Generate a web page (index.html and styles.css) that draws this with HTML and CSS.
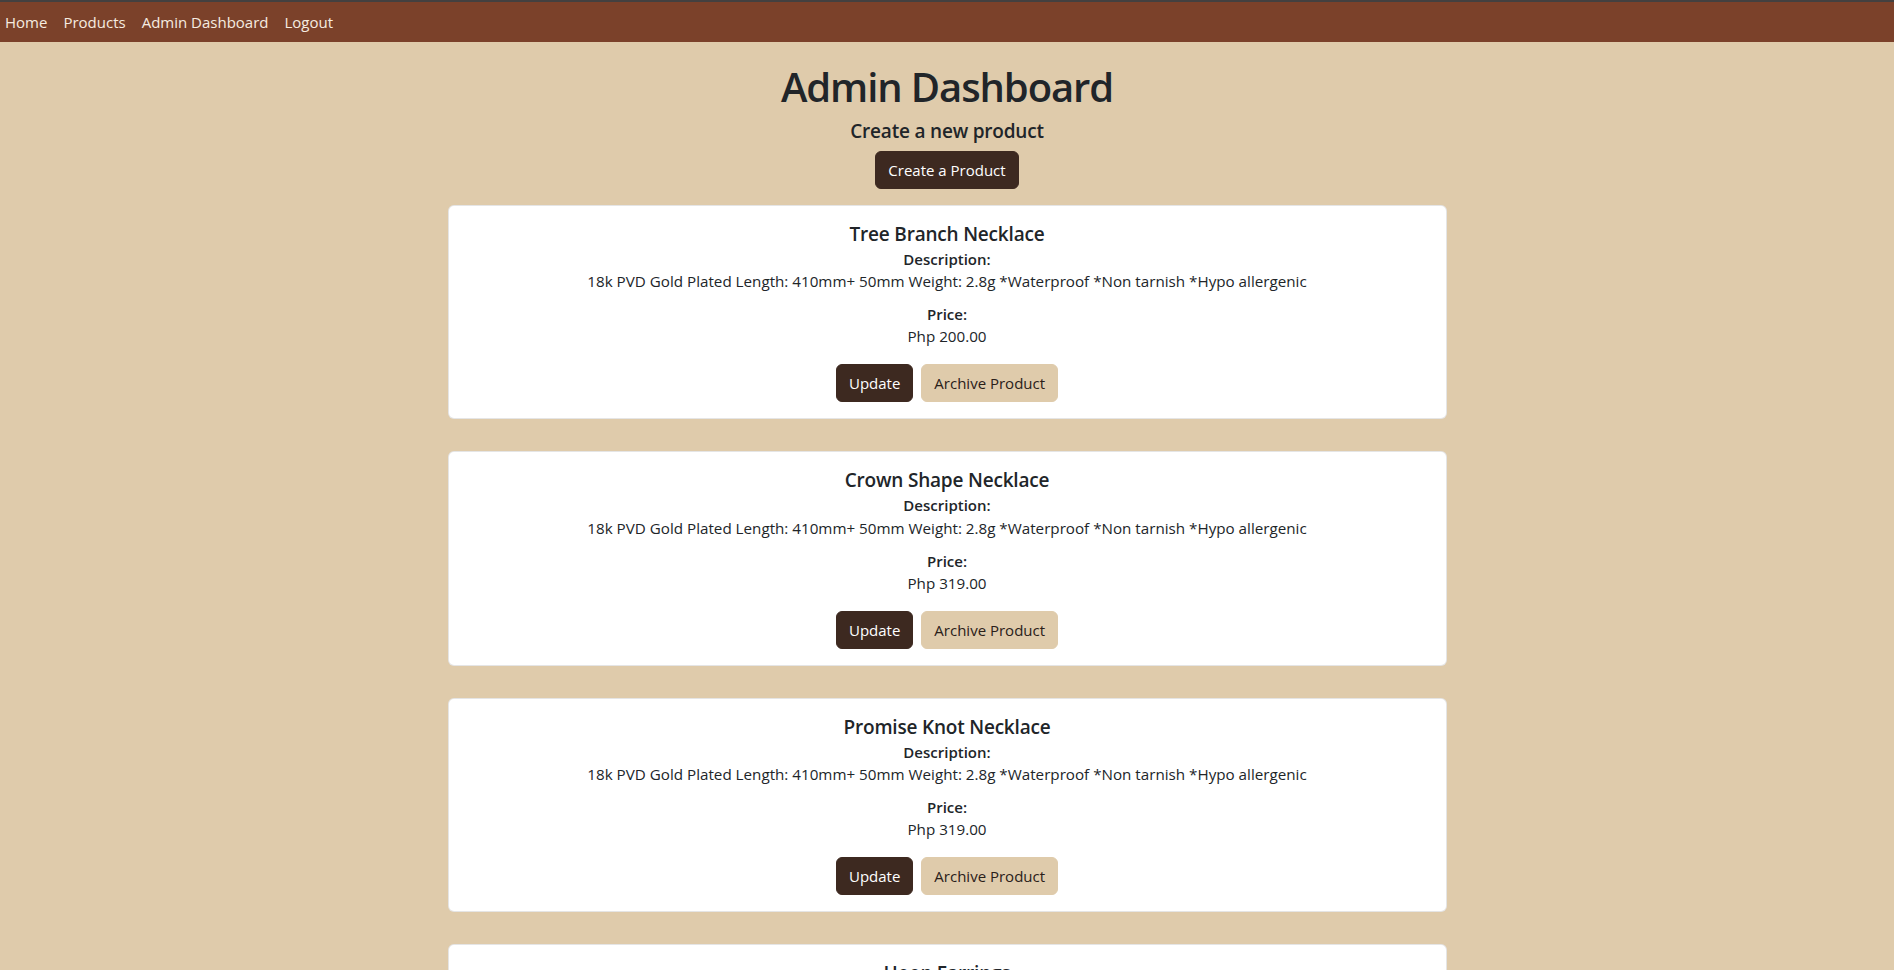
FILE: index.html
```html
<!DOCTYPE html>
<html lang="en">
<head>
<meta charset="utf-8">
<title>Admin Dashboard</title>
<link rel="stylesheet" href="styles.css">
</head>
<body>
<nav class="navbar">
  <a class="nav-link" href="#">Home</a>
  <a class="nav-link" href="#">Products</a>
  <a class="nav-link" href="#">Admin Dashboard</a>
  <a class="nav-link" href="#">Logout</a>
</nav>
<main class="container">
  <h1 class="page-title">Admin Dashboard</h1>
  <h5 class="page-subtitle">Create a new product</h5>
  <button class="btn btn-dark">Create a Product</button>
  <div class="card-list">
    <div class="card">
      <h5 class="card-title">Tree Branch Necklace</h5>
      <h6 class="card-subtitle">Description:</h6>
      <p class="card-text">18k PVD Gold Plated Length: 410mm+ 50mm Weight: 2.8g *Waterproof *Non tarnish *Hypo allergenic</p>
      <h6 class="card-subtitle">Price:</h6>
      <p class="card-text">Php 200.00</p>
      <div class="actions"><button class="btn btn-dark">Update</button><button class="btn btn-light">Archive Product</button></div>
    </div>
    <div class="card">
      <h5 class="card-title">Crown Shape Necklace</h5>
      <h6 class="card-subtitle">Description:</h6>
      <p class="card-text">18k PVD Gold Plated Length: 410mm+ 50mm Weight: 2.8g *Waterproof *Non tarnish *Hypo allergenic</p>
      <h6 class="card-subtitle">Price:</h6>
      <p class="card-text">Php 319.00</p>
      <div class="actions"><button class="btn btn-dark">Update</button><button class="btn btn-light">Archive Product</button></div>
    </div>
    <div class="card">
      <h5 class="card-title">Promise Knot Necklace</h5>
      <h6 class="card-subtitle">Description:</h6>
      <p class="card-text">18k PVD Gold Plated Length: 410mm+ 50mm Weight: 2.8g *Waterproof *Non tarnish *Hypo allergenic</p>
      <h6 class="card-subtitle">Price:</h6>
      <p class="card-text">Php 319.00</p>
      <div class="actions"><button class="btn btn-dark">Update</button><button class="btn btn-light">Archive Product</button></div>
    </div>
    <div class="card">
      <h5 class="card-title">Hoop Earrings</h5>
      <h6 class="card-subtitle">Description:</h6>
      <p class="card-text">18k PVD Gold Plated *Waterproof *Non tarnish *Hypo allergenic</p>
      <h6 class="card-subtitle">Price:</h6>
      <p class="card-text">Php 250.00</p>
      <div class="actions"><button class="btn btn-dark">Update</button><button class="btn btn-light">Archive Product</button></div>
    </div>
  </div>
</main>
</body>
</html>
```
FILE: styles.css
```css
* { box-sizing: border-box; }
html, body { margin: 0; padding: 0; }
body {
  background: #dfcbab;
  color: #212529;
  font-family: "Open Sans", "Noto Sans", sans-serif;
  font-size: 16px;
  line-height: 1.5;
}
.navbar {
  display: flex;
  gap: 16px;
  align-items: center;
  height: 42px;
  padding: 0 5px;
  background: #7b412a;
  border-top: 2px solid #434040;
}
.nav-link {
  color: #f6ece0;
  text-decoration: none;
  font-size: 15px;
}
.container {
  display: flex;
  flex-direction: column;
  align-items: center;
  padding-top: 21px;
  padding-bottom: 40px;
}
.page-title {
  margin: 0 0 8px;
  font-size: 40px;
  line-height: 48px;
  font-weight: 600;
  letter-spacing: -1.1px;
}
.page-subtitle {
  margin: 0 0 8px;
  font-size: 19px;
  line-height: 24px;
  font-weight: 600;
  letter-spacing: -0.2px;
}
.btn {
  font-family: inherit;
  font-size: 15px;
  line-height: 24px;
  padding: 6px 12px;
  border: 1px solid transparent;
  border-radius: 6px;
  cursor: pointer;
}
.btn-dark { background: #3d2920; color: #fff; border-color: #3d2920; }
.btn-light { background: #dfcbab; color: #2a2019; border-color: #dfcbab; }
.card-list {
  display: flex;
  flex-direction: column;
  gap: 32px;
  margin-top: 16px;
  width: 999px;
}
.card {
  background: #fff;
  border: 1px solid rgba(0,0,0,0.1);
  border-radius: 6px;
  padding: 16px;
  text-align: center;
}
.card-title {
  margin: 0 0 8px;
  font-size: 19px;
  line-height: 24px;
  font-weight: 600;
  letter-spacing: -0.2px;
}
.card-subtitle {
  margin: -4px 0 0;
  font-size: 15px;
  line-height: 19.2px;
  font-weight: 600;
}
.card-text {
  margin: 0 0 16px;
  font-size: 15.2px;
  line-height: 24px;
}
.actions {
  display: flex;
  justify-content: center;
  gap: 8px;
}
```
